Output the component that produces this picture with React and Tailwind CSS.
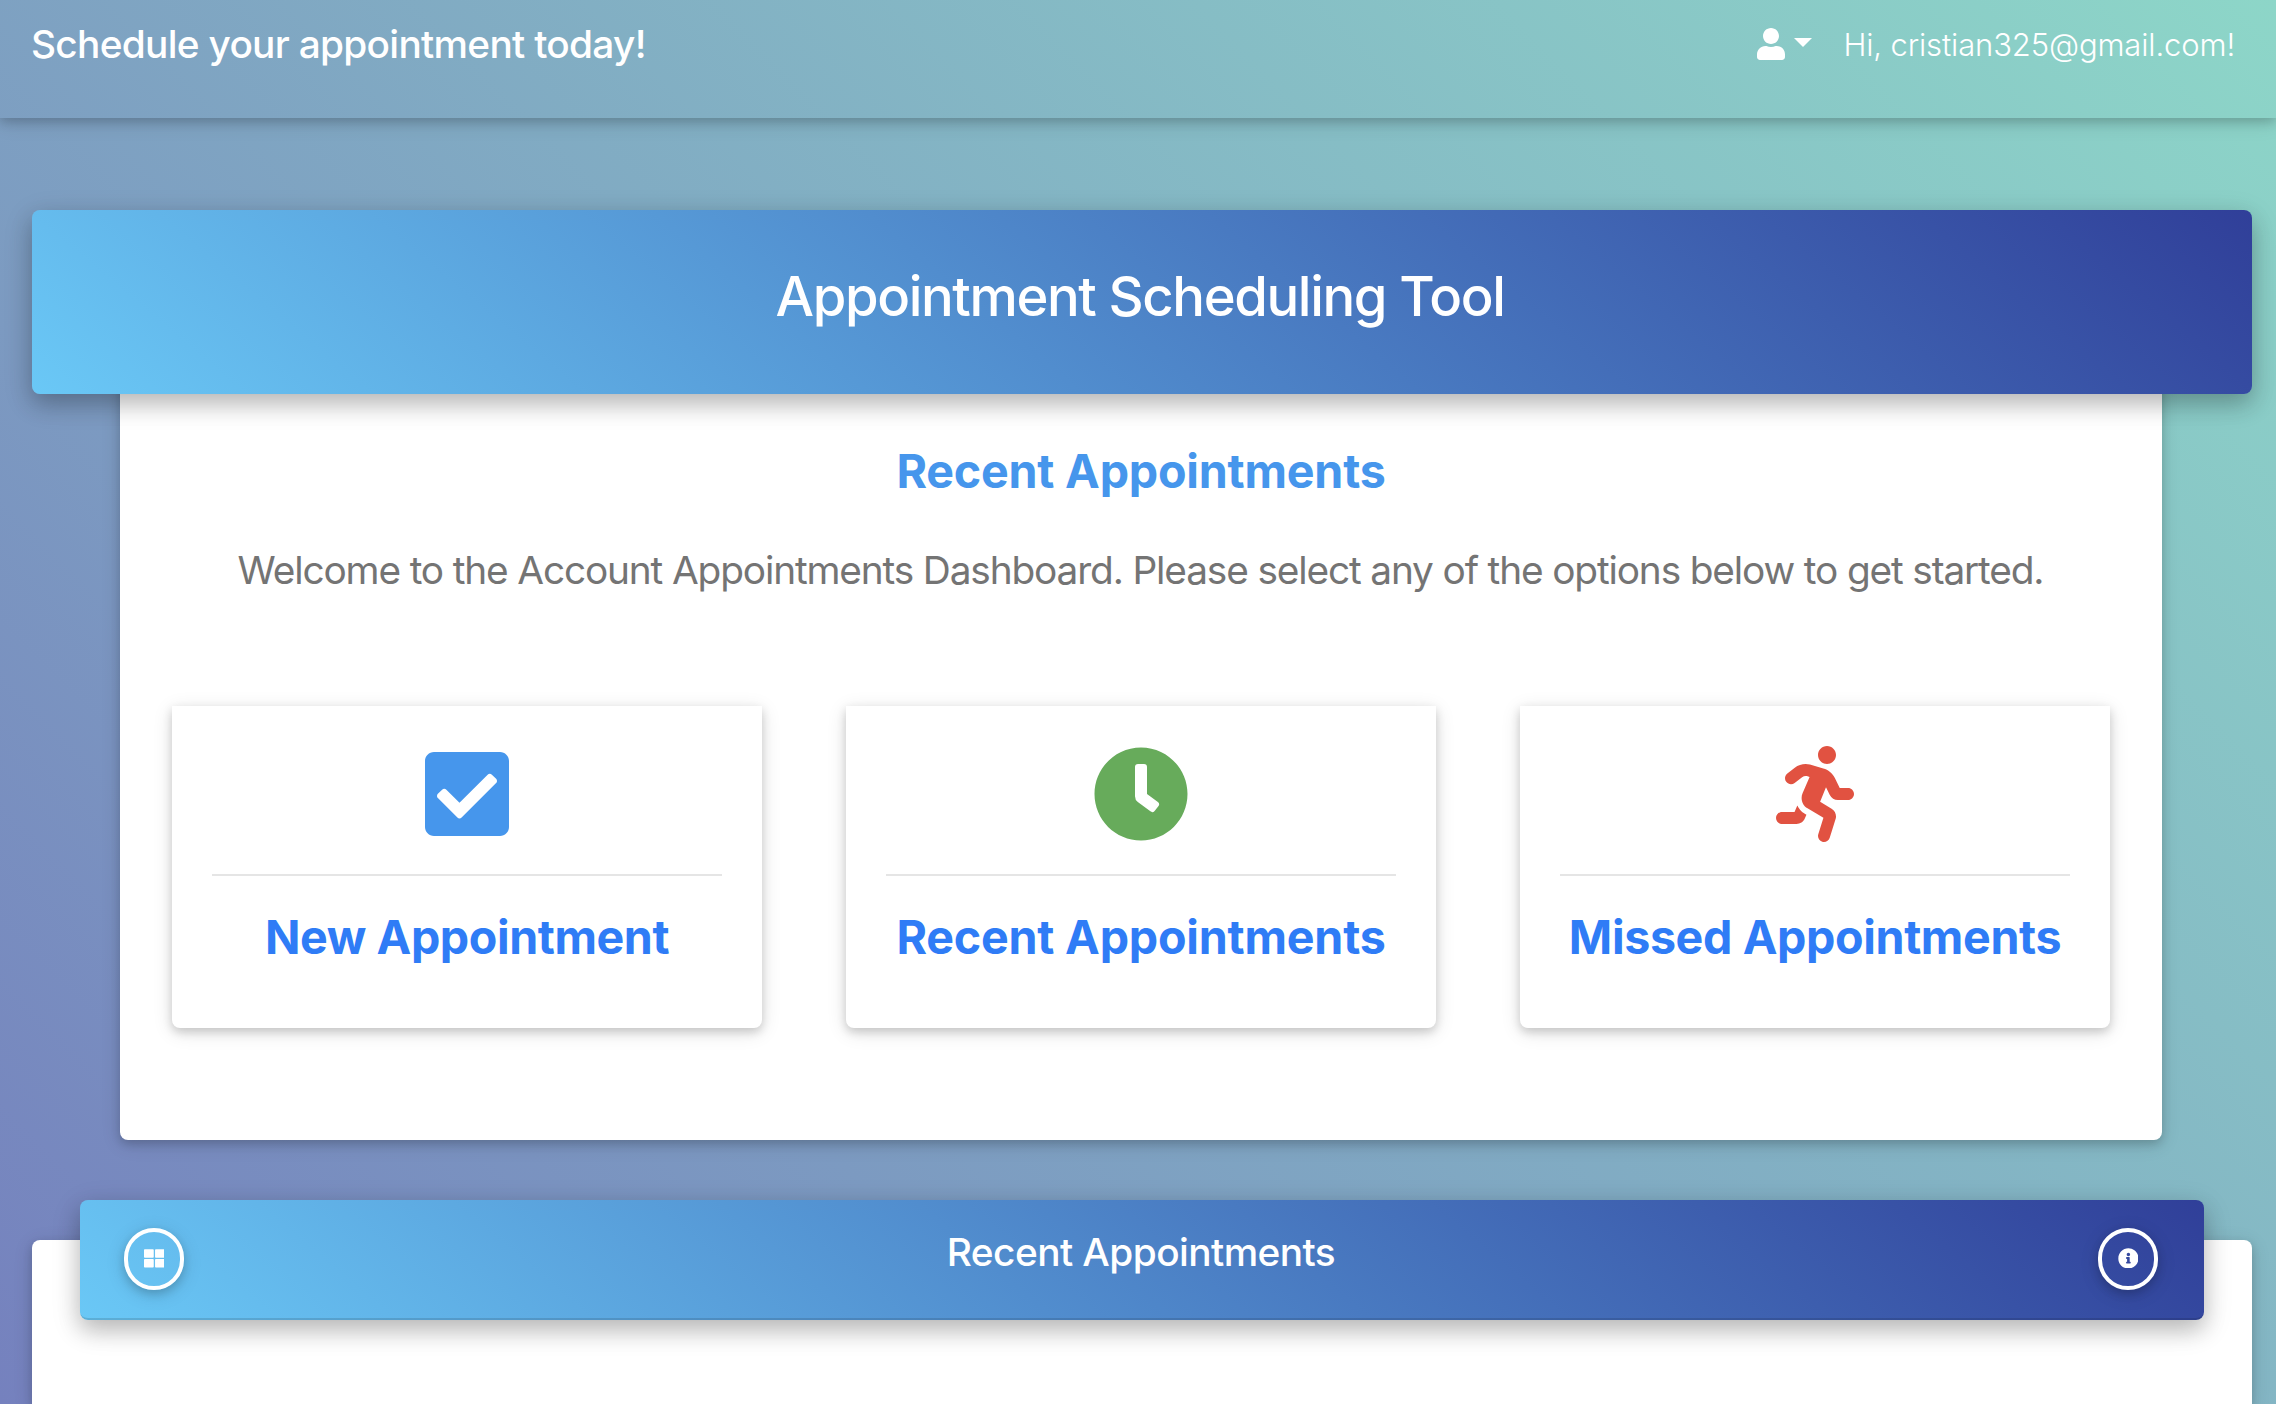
import {
  FaCheckSquare,
  FaClock,
  FaInfoCircle,
  FaRunning,
  FaThLarge,
  FaUser,
} from "react-icons/fa";

const options = [
  { label: "New Appointment", Icon: FaCheckSquare, color: "text-[#4696ec]", spacing: "tracking-[-0.42px]" },
  { label: "Recent Appointments", Icon: FaClock, color: "text-[#67ab5b]", spacing: "tracking-[-0.2px]" },
  { label: "Missed Appointments", Icon: FaRunning, color: "text-[#e15241]", spacing: "tracking-[-0.37px]" },
];

function Navbar() {
  return (
    <header className="flex h-[118px] shrink-0 items-start justify-between pl-[31px] pr-[41px] shadow-[0_4px_10px_rgba(0,0,0,0.16),0_4px_20px_rgba(0,0,0,0.12)]">
      <a className="mt-[22px] whitespace-nowrap text-[38.8px] font-medium leading-[44px] tracking-[-0.7px]">
        Schedule your appointment today!
      </a>
      <nav className="flex items-start">
        <button className="mt-7 flex items-start gap-[9px]" aria-label="Account">
          <FaUser className="h-8 w-7" />
          <span className="mt-[10px] h-0 w-0 border-x-[9.6px] border-t-[9.6px] border-x-transparent border-t-white" />
        </button>
        <span className="ml-[31px] mt-[25px] whitespace-nowrap text-[31px] font-light leading-10 tracking-[-0.139px]">
          Hi, cristian325@gmail.com!
        </span>
      </nav>
    </header>
  );
}

function OptionCard({ label, Icon, color, spacing }) {
  return (
    <a className="flex h-[322px] flex-col items-center rounded-b-lg bg-white px-10 pt-10 shadow-[0_4px_10px_rgba(0,0,0,0.16),0_4px_20px_rgba(0,0,0,0.12)]">
      <Icon className={`h-24 w-24 ${color}`} />
      <hr className="mt-8 w-full border-0 border-t-2 border-[#e5e5e5]" />
      <h3 className={`mt-[33px] whitespace-nowrap text-[46.6px] font-bold leading-[56px] text-[#2f7cf6] ${spacing}`}>
        {label}
      </h3>
    </a>
  );
}

function RoundButton({ Icon, label }) {
  return (
    <button
      aria-label={label}
      className="flex h-[62px] w-[60px] items-center justify-center rounded-full border-4 border-white pb-[2px] shadow-[0_4px_10px_rgba(0,0,0,0.16),0_4px_20px_rgba(0,0,0,0.12)]"
    >
      <Icon className="h-[20.8px] w-[20.8px]" />
    </button>
  );
}

export default function App() {
  return (
    <div className="flex h-[1404px] w-full flex-col overflow-hidden bg-[linear-gradient(45deg,#7581be,#8dd6c8)] font-[Inter,sans-serif] text-white">
      <Navbar />
      <main className="flex flex-1 flex-col pl-8 pr-6 pt-[92px]">
        <section className="flex flex-col">
          <div className="relative z-10 flex h-[184px] justify-center rounded-lg bg-[linear-gradient(40deg,#6ac8f6,#303f99)] pr-1 pt-[54px] shadow-[0_10px_22px_rgba(0,0,0,0.18),0_8px_30px_rgba(0,0,0,0.15)]">
            <h1 className="whitespace-nowrap text-[54.4px] font-medium leading-[64px] tracking-[-1.377px]">
              Appointment Scheduling Tool
            </h1>
          </div>
          <div className="-mt-6 ml-[88px] mr-[90px] flex h-[770px] flex-col rounded-lg bg-white px-[52px] pt-[73px] text-center shadow-[0_4px_10px_rgba(0,0,0,0.16),0_4px_20px_rgba(0,0,0,0.12)]">
            <h2 className="text-[46.6px] font-bold leading-[56px] tracking-[-0.2px] text-[#4696ec]">
              Recent Appointments
            </h2>
            <p className="mt-[41px] whitespace-nowrap pr-px text-[38.8px] leading-[60px] tracking-[-1.145px] text-[#747474]">
              Welcome to the Account Appointments Dashboard. Please select any of the options below to get started.
            </p>
            <div className="mt-[106px] grid grid-cols-3 gap-[84px]">
              {options.map((option) => (
                <OptionCard key={option.label} {...option} />
              ))}
            </div>
          </div>
        </section>
        <section className="mt-[100px] flex flex-1 flex-col rounded-t-lg bg-white shadow-[0_4px_10px_rgba(0,0,0,0.16),0_4px_20px_rgba(0,0,0,0.12)]">
          <div className="mx-12 -mt-10 flex h-[120px] items-start justify-between rounded-lg border-b-2 border-black/[0.125] bg-[linear-gradient(40deg,#6ac8f6,#303f99)] bg-origin-border pl-[44px] pr-[46px] pt-7 shadow-[0_10px_22px_rgba(0,0,0,0.18),0_8px_30px_rgba(0,0,0,0.15)]">
            <RoundButton Icon={FaThLarge} label="Grid view" />
            <h2 className="whitespace-nowrap text-[38.8px] font-medium leading-[48px] tracking-[-0.563px]">
              Recent Appointments
            </h2>
            <RoundButton Icon={FaInfoCircle} label="Information" />
          </div>
        </section>
      </main>
    </div>
  );
}
